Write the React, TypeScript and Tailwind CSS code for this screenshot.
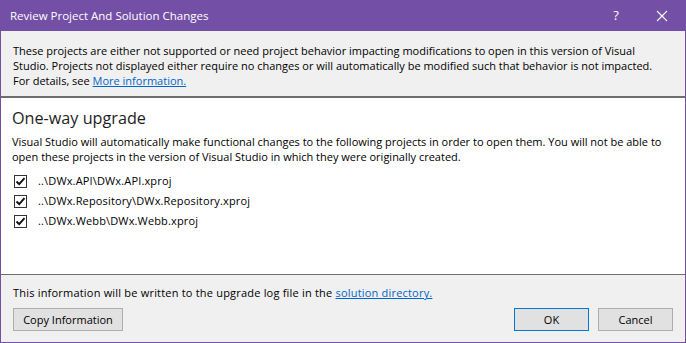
import React from "react";

const font = { fontFamily: '"Open Sans", "Noto Sans", sans-serif' };

function Check() {
  return (
    <span className="w-[13px] h-[13px] border border-[#333333] bg-white flex items-center justify-center shrink-0">
      <svg width="11" height="11" viewBox="0 0 11 11">
        <path d="M1.5 5.5 L4.2 8.2 L9.5 2.2" fill="none" stroke="#111" strokeWidth="1.9" />
      </svg>
    </span>
  );
}

export default function App() {
  const projects = [
    "..\\DWx.API\\DWx.API.xproj",
    "..\\DWx.Repository\\DWx.Repository.xproj",
    "..\\DWx.Webb\\DWx.Webb.xproj",
  ];
  return (
    <div
      className="w-[686px] h-[343px] flex flex-col bg-[#734fa6] text-[11px] text-black overflow-hidden"
      style={font}
    >
      <div className="h-[31px] flex items-center pl-[10px] text-white shrink-0">
        <span className="text-[11.5px] flex-1">Review Project And Solution Changes</span>
        <span className="w-[20px] text-center text-[13px] mr-[30px]">?</span>
        <svg width="12" height="12" viewBox="0 0 12 12" className="mr-[18px]">
          <path d="M1 1 L11 11 M11 1 L1 11" stroke="white" strokeWidth="1.2" />
        </svg>
      </div>
      <div className="flex-1 flex flex-col mx-px mb-px bg-white">
        <div className="h-[67px] bg-[#f0f0f0] border-b-2 border-[#6e6e6e] pt-[12px] px-[12px] leading-[15px] shrink-0">
          These projects are either not supported or need project behavior impacting modifications to open in this version of Visual
          Studio. Projects not displayed either require no changes or will automatically be modified such that behavior is not impacted.
          <br />
          For details, see{" "}
          <span className="text-[#0066cc] underline">More information.</span>
        </div>
        <div className="flex-1 flex flex-col px-[11px] pt-[9px]">
          <div className="text-[16.2px] leading-[22px] text-[#1e1e1e]">One-way upgrade</div>
          <div className="mt-[5px] leading-[15px]">
            Visual Studio will automatically make functional changes to the following projects in order to open them. You will not be able
            to open these projects in the version of Visual Studio in which they were originally created.
          </div>
          <div className="mt-[7px] flex flex-col pl-[2px]">
            {projects.map((p) => (
              <div key={p} className="h-[20px] flex items-center gap-[11px]">
                <Check />
                <span className="tracking-[0.15px]">{p}</span>
              </div>
            ))}
          </div>
        </div>
        <div className="h-[68px] bg-[#f0f0f0] border-t border-[#6e6e6e] px-[12px] pt-[10px] flex flex-col shrink-0">
          <div className="leading-[15px] tracking-[0.2px]">
            This information will be written to the upgrade log file in the{" "}
            <span className="text-[#0066cc] underline">solution directory.</span>
          </div>
          <div className="mt-[8px] flex items-center">
            <button className="w-[110px] h-[23px] bg-[#e1e1e1] border border-[#adadad] text-[11px] leading-none">
              Copy Information
            </button>
            <div className="flex-1" />
            <button className="w-[75px] h-[23px] bg-[#e1e1e1] border border-[#0078d7] text-[11px] leading-none">
              OK
            </button>
            <button className="ml-[9px] w-[75px] h-[23px] bg-[#e1e1e1] border border-[#adadad] text-[11px] leading-none">
              Cancel
            </button>
          </div>
        </div>
      </div>
    </div>
  );
}
